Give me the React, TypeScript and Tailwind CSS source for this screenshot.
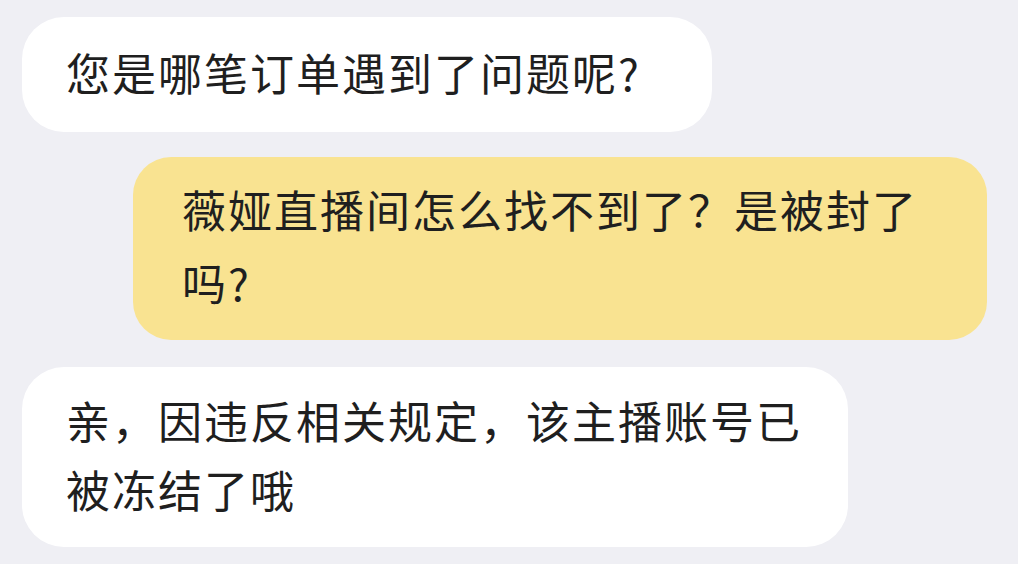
const font = { fontFamily: '"Noto Sans CJK SC", "Noto Sans", sans-serif' };

export default function App() {
  return (
    <div
      className="h-[564px] w-[1018px] overflow-hidden bg-[#efeff4] text-[#1f1f1f]"
      style={font}
    >
      <div className="flex flex-col px-[22px] pt-[17px]">
        <div className="flex h-[115px] w-[690px] items-center rounded-[42px] bg-white pb-[4px] pl-[44px] text-[44px] leading-[73px] tracking-[2px]">
          您是哪笔订单遇到了问题呢?
        </div>

        <div className="ml-[111px] mt-[25px] h-[183px] w-[854px] rounded-[38px] bg-[#f9e391] pl-[49px] pr-[45px] pt-[16px] text-[44px] leading-[73px] tracking-[2px]">
          薇娅直播间怎么找不到了？是被封了吗?
        </div>

        <div className="mt-[27px] h-[180px] w-[826px] rounded-[42px] bg-white pl-[44px] pr-[40px] pt-[19px] text-[44px] leading-[69px] tracking-[2px]">
          亲，因违反相关规定，该主播账号已被冻结了哦
        </div>
      </div>
    </div>
  );
}
